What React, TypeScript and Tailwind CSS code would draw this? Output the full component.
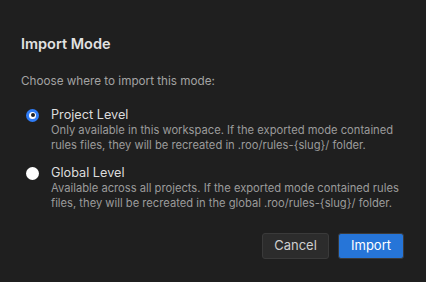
const options = [
  {
    label: "Project Level",
    checked: true,
    description:
      "Only available in this workspace. If the exported mode contained rules files, they will be recreated in .roo/rules-{slug}/ folder.",
  },
  {
    label: "Global Level",
    checked: false,
    description:
      "Available across all projects. If the exported mode contained rules files, they will be recreated in the global .roo/rules-{slug}/ folder.",
  },
];

export default function App() {
  return (
    <div className="w-[426px] h-[282px] bg-[#1f1f1f] px-[21px] pt-[34px] font-['Inter','Noto_Sans',sans-serif] antialiased">
      {/* Title */}
      <h2 className="text-[14.5px] font-semibold leading-5 text-[#e2e2e2]">Import Mode</h2>

      {/* Subtitle */}
      <p className="mt-[19px] text-[11.7px] leading-4 text-[#a3a3a3]">Choose where to import this mode:</p>

      {/* Options */}
      <div className="mt-[18px] pl-[5px] flex flex-col gap-[12px]">
        {options.map((opt) => (
          <label key={opt.label} className="flex gap-3">
            {opt.checked ? (
              <span className="mt-[1.5px] w-[13px] h-[13px] shrink-0 rounded-full bg-[#2f7cf6] flex items-center justify-center">
                <span className="w-[7px] h-[7px] rounded-full bg-white flex items-center justify-center">
                  <span className="w-[4px] h-[4px] rounded-full bg-[#1f1f1f]" />
                </span>
              </span>
            ) : (
              <span className="mt-[1.5px] w-[13px] h-[13px] shrink-0 rounded-full bg-white" />
            )}
            <span className="flex flex-col">
              <span className="text-[12.7px] leading-4 text-[#dcdcdc]">{opt.label}</span>
              <span className="w-[354px] text-[11.2px] leading-[15px] text-[#9b9b9b]">{opt.description}</span>
            </span>
          </label>
        ))}
      </div>

      {/* Buttons */}
      <div className="mt-[22px] pr-px flex justify-end gap-[9px]">
        <button className="w-[67px] h-[26px] rounded-[3px] border border-[#3a3a3a] bg-[#2c2c2c] text-[13px] text-[#cfcfcf]">
          Cancel
        </button>
        <button className="w-[66px] h-[26px] rounded-[3px] border border-[#3a3a3a] bg-[#2675d8] text-[13px] text-white">
          Import
        </button>
      </div>
    </div>
  );
}
